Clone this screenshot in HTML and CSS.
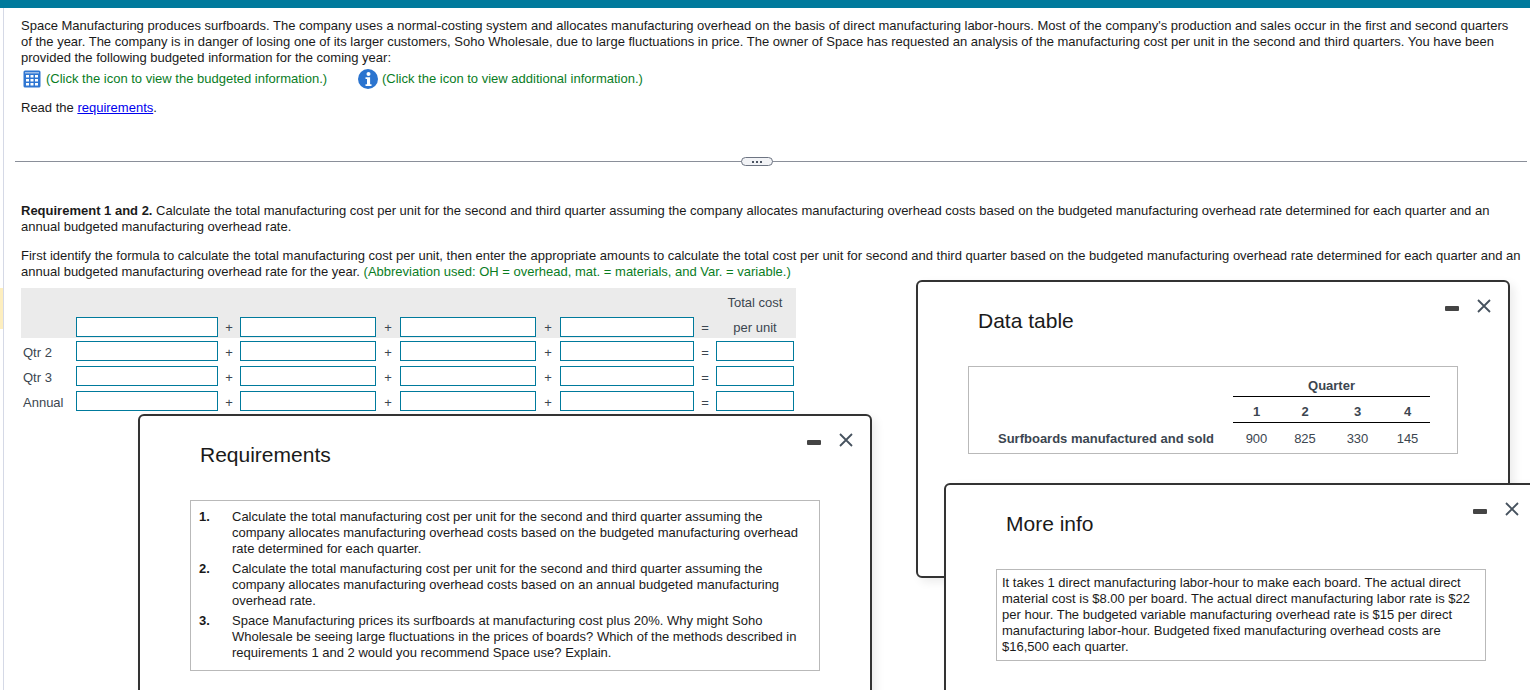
FILE: index.html
```html
<!DOCTYPE html>
<html lang="en">
<head>
<meta charset="utf-8">
<title>Space Manufacturing</title>
<link rel="stylesheet" href="styles.css">
</head>
<body>
<div class="topbar"></div>
<div class="edge-mark"></div>
<main class="page">
  <section class="intro">
    <p class="para">Space Manufacturing produces surfboards. The company uses a normal-costing system and allocates manufacturing overhead on the basis of direct manufacturing labor-hours. Most of the company's production and sales occur in the first and second quarters of the year. The company is in danger of losing one of its larger customers, Soho Wholesale, due to large fluctuations in price. The owner of Space has requested an analysis of the manufacturing cost per unit in the second and third quarters. You have been provided the following budgeted information for the coming year:</p>
    <div class="links">
      <span class="link-item first">
        <svg class="icon" width="18" height="18" viewBox="0 0 18 18"><rect x="0.5" y="0.5" width="17" height="17" rx="1.5" fill="#2f76d2"/><rect x="2" y="2" width="14" height="1.5" fill="#9dbde8"/><g fill="#fff"><rect x="3" y="5" width="3" height="2.5"/><rect x="7.5" y="5" width="3" height="2.5"/><rect x="12" y="5" width="3" height="2.5"/><rect x="3" y="9" width="3" height="2.5"/><rect x="7.5" y="9" width="3" height="2.5"/><rect x="12" y="9" width="3" height="2.5"/><rect x="3" y="13" width="3" height="2.5"/><rect x="7.5" y="13" width="3" height="2.5"/><rect x="12" y="13" width="3" height="2.5"/></g></svg>
        <span class="hint">(Click the icon to view the budgeted information.)</span>
      </span>
      <span class="link-item second">
        <svg class="icon" width="20" height="20" viewBox="0 0 20 20"><circle cx="10" cy="10" r="10" fill="#2b74cf"/><circle cx="10.5" cy="5" r="2" fill="#fff"/><path d="M7.5 8.2h4.6v7h1.4v1.8H7.5v-1.8h1.5V10H7.5z" fill="#fff"/></svg>
        <span class="hint">(Click the icon to view additional information.)</span>
      </span>
    </div>
    <p class="para read">Read the <a class="req-link" href="#">requirements</a>.</p>
  </section>

  <div class="divider"><span class="pill"><i></i><i></i><i></i></span></div>

  <section class="work">
    <p class="para"><b>Requirement 1 and 2.</b> Calculate the total manufacturing cost per unit for the second and third quarter assuming the company allocates manufacturing overhead costs based on the budgeted manufacturing overhead rate determined for each quarter and an annual budgeted manufacturing overhead rate.</p>
    <p class="para second-para">First identify the formula to calculate the total manufacturing cost per unit, then enter the appropriate amounts to calculate the total cost per unit for second and third quarter based on the budgeted manufacturing overhead rate determined for each quarter and an annual budgeted manufacturing overhead rate for the year. <span class="hint">(Abbreviation used: OH = overhead, mat. = materials, and Var. = variable.)</span></p>

    <div class="calc">
      <div class="calc-head">
        <div class="calc-row short"><span></span><span></span><span></span><span></span><span></span><span></span><span></span><span></span><span></span><span class="col-title">Total cost</span></div>
        <div class="calc-row">
          <span></span><input class="cell" type="text"><span class="op">+</span><input class="cell" type="text"><span class="op">+</span><input class="cell" type="text"><span class="op">+</span><input class="cell" type="text"><span class="op">=</span><span class="col-title">per unit</span>
        </div>
      </div>
      <div class="calc-row body-row">
        <span class="row-label">Qtr 2</span><input class="cell" type="text"><span class="op">+</span><input class="cell" type="text"><span class="op">+</span><input class="cell" type="text"><span class="op">+</span><input class="cell" type="text"><span class="op">=</span><input class="cell" type="text">
      </div>
      <div class="calc-row body-row">
        <span class="row-label">Qtr 3</span><input class="cell" type="text"><span class="op">+</span><input class="cell" type="text"><span class="op">+</span><input class="cell" type="text"><span class="op">+</span><input class="cell" type="text"><span class="op">=</span><input class="cell" type="text">
      </div>
      <div class="calc-row body-row">
        <span class="row-label">Annual</span><input class="cell" type="text"><span class="op">+</span><input class="cell" type="text"><span class="op">+</span><input class="cell" type="text"><span class="op">+</span><input class="cell" type="text"><span class="op">=</span><input class="cell" type="text">
      </div>
    </div>
  </section>
</main>

<aside class="window win-req">
  <div class="win-controls">
    <span class="min"></span>
    <svg class="close" width="14" height="14" viewBox="0 0 14 14"><path d="M1 1l12 12M13 1L1 13" stroke="#46525e" stroke-width="1.8" fill="none"/></svg>
  </div>
  <h2 class="win-title">Requirements</h2>
  <ol class="req-list">
    <li><b>1.</b><span>Calculate the total manufacturing cost per unit for the second and third quarter assuming the company allocates manufacturing overhead costs based on the budgeted manufacturing overhead rate determined for each quarter.</span></li>
    <li><b>2.</b><span>Calculate the total manufacturing cost per unit for the second and third quarter assuming the company allocates manufacturing overhead costs based on an annual budgeted manufacturing overhead rate.</span></li>
    <li><b>3.</b><span>Space Manufacturing prices its surfboards at manufacturing cost plus 20%. Why might Soho Wholesale be seeing large fluctuations in the prices of boards? Which of the methods described in requirements 1 and 2 would you recommend Space use? Explain.</span></li>
  </ol>
</aside>

<aside class="window win-data">
  <div class="win-controls">
    <span class="min"></span>
    <svg class="close" width="14" height="14" viewBox="0 0 14 14"><path d="M1 1l12 12M13 1L1 13" stroke="#46525e" stroke-width="1.8" fill="none"/></svg>
  </div>
  <h2 class="win-title">Data table</h2>
  <div class="data-box">
    <table class="data">
      <colgroup><col class="c0"><col class="c1"><col class="c2"><col class="c3"><col class="c4"></colgroup>
      <tr class="q-row"><td class="d-label"></td><th colspan="4" class="q-head">Quarter</th></tr>
      <tr class="n-row"><td class="d-label"></td><th>1</th><th>2</th><th>3</th><th>4</th></tr>
      <tr class="v-row"><th class="d-label">Surfboards manufactured and sold</th><td>900</td><td>825</td><td>330</td><td>145</td></tr>
    </table>
  </div>
</aside>

<aside class="window win-info">
  <div class="win-controls">
    <span class="min"></span>
    <svg class="close" width="14" height="14" viewBox="0 0 14 14"><path d="M1 1l12 12M13 1L1 13" stroke="#46525e" stroke-width="1.8" fill="none"/></svg>
  </div>
  <h2 class="win-title">More info</h2>
  <p class="info-box">It takes 1 direct manufacturing labor-hour to make each board. The actual direct material cost is $8.00 per board. The actual direct manufacturing labor rate is $22 per hour. The budgeted variable manufacturing overhead rate is $15 per direct manufacturing labor-hour. Budgeted fixed manufacturing overhead costs are $16,500 each quarter.</p>
</aside>
</body>
</html>
```
FILE: styles.css
```css
html, body {
  margin: 0;
  height: 690px;
  overflow: hidden;
  background: #fff;
}
body {
  position: relative;
  font-family: "Liberation Sans", Arial, sans-serif;
  font-size: 13px;
  line-height: 16px;
  color: #1a1a1a;
}
.topbar { height: 8px; background: #007a9c; }
.edge-mark {
  position: absolute;
  left: 0;
  top: 8px;
  bottom: 0;
  width: 3px;
  border-right: 1px solid #d5d9e6;
}
.edge-mark::after {
  content: "";
  position: absolute;
  left: 0;
  top: 280px;
  width: 3px;
  height: 41px;
  background: #fdeebf;
}
.page { padding: 10px 0 0 21px; }
.para { margin: 0; width: 1500px; }
.links { display: flex; margin-top: 3px; height: 20px; align-items: center; }
.link-item { display: flex; align-items: center; }
.link-item.first { margin-left: 2px; width: 335px; gap: 5px; }
.link-item.second { gap: 4px; }
.hint { color: #0a7d1f; }
.read { margin-top: 11px; }
.req-link { color: #0000ee; text-decoration: underline; }
.divider {
  position: relative;
  margin: 45px 0 0 -6px;
  width: 1512px;
  height: 1px;
  background: #8a8f99;
}
.pill {
  position: absolute;
  left: 726px;
  top: -4px;
  box-sizing: border-box;
  width: 32px;
  height: 9px;
  display: flex;
  gap: 2px;
  align-items: center;
  justify-content: center;
  background: #f2f3f6;
  border: 1px solid #6d7482;
  border-radius: 5px;
}
.pill i { width: 2px; height: 2px; background: #4c5462; }
.work { margin-top: 41px; }
.second-para { margin-top: 13px; width: 1505px; }
.calc { margin-top: 8px; width: 775px; color: #3c4650; }
.calc-head { background: #ebebeb; height: 50px; }
.calc-row {
  display: grid;
  grid-template-columns: 55px 142px 22px 136px 24px 136px 24px 134px 22px 78px;
  align-items: center;
  height: 25px;
}
.calc-head .calc-row:last-child .cell { margin-top: 3px; }
.body-row .cell { margin-top: 1px; }
.cell {
  box-sizing: border-box;
  display: block;
  width: 100%;
  height: 20px;
  margin: 0;
  padding: 0;
  background: #fff;
  border: 1px solid #007a9c;
  border-radius: 0;
}
.op { text-align: center; margin-top: 5px; }
.body-row .op { margin-top: 5px; }
.col-title { text-align: center; }
.calc-head .col-title { margin-top: 5px; }
.row-label { padding-left: 2px; margin-top: 4px; }
.window {
  position: absolute;
  box-sizing: border-box;
  background: #fff;
  border: 2px solid #333;
  border-radius: 6px;
  box-shadow: 4px 4px 10px rgba(0,0,0,.08);
}
.win-req { left: 138px; top: 414px; width: 734px; height: 320px; z-index: 1; }
.win-data { left: 916px; top: 280px; width: 594px; height: 298px; z-index: 1; }
.win-info { left: 944px; top: 483px; width: 640px; height: 300px; z-index: 2; }
.win-title {
  margin: 0;
  font-size: 21px;
  line-height: 24px;
  font-weight: 400;
  color: #1a1a1a;
  padding: 27px 0 0 60px;
}
.win-controls {
  position: absolute;
  top: 17px;
  display: flex;
  align-items: center;
  gap: 18px;
}
.win-req .win-controls { left: 667px; }
.win-data .win-controls { left: 527px; }
.win-info .win-controls { left: 527px; }
.min { width: 14px; height: 5px; border-radius: 1px; background: #444; margin-top: 4px; }
.close { display: block; }
.req-list {
  list-style: none;
  box-sizing: border-box;
  margin: 33px 0 0 50px;
  padding: 8px 16px 9px 8px;
  width: 630px;
  border: 1px solid #b9b9b9;
  color: #1a1a1a;
}
.req-list li { display: flex; margin-bottom: 4px; }
.req-list li:last-child { margin-bottom: 0; }
.req-list b { flex: 0 0 33px; }
.data-box {
  box-sizing: border-box;
  margin: 33px 0 0 50px;
  width: 490px;
  height: 88px;
  padding: 9px 0 0 28px;
  border: 1px solid #b9b9b9;
}
.data { border-collapse: collapse; table-layout: fixed; width: 433px; color: #3c4650; }
.c0 { width: 236px; }
.c1 { width: 47px; }
.c2 { width: 50px; }
.c3 { width: 55px; }
.c4 { width: 45px; }
.data td, .data th { padding: 0; text-align: center; }
.data .d-label { text-align: left; padding-left: 1px; }
.q-row th { height: 18px; border-bottom: 1px solid #000; vertical-align: bottom; padding-bottom: 2px; }
.n-row th { height: 23px; border-bottom: 1px solid #000; vertical-align: bottom; padding-bottom: 2px; }
.v-row th, .v-row td { height: 28px; padding-top: 2px; font-weight: 400; }
.v-row th { font-weight: 700; }
.info-box {
  box-sizing: border-box;
  margin: 33px 0 0 50px;
  padding: 5px;
  width: 490px;
  height: 92px;
  border: 1px solid #b9b9b9;
}
```
